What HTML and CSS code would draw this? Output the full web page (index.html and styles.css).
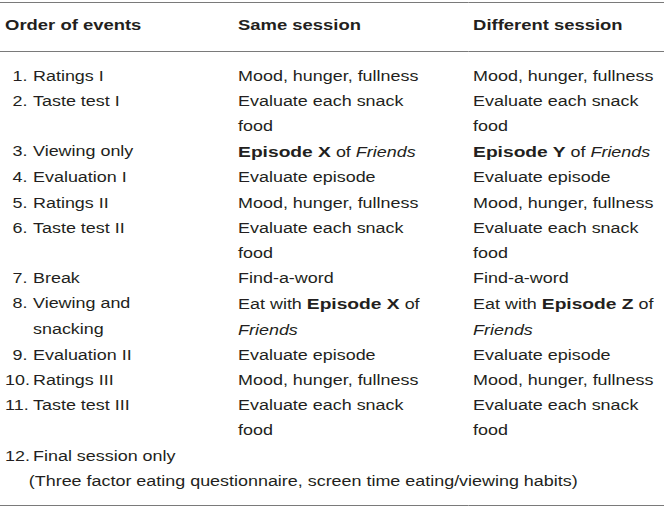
FILE: index.html
```html
<!DOCTYPE html>
<html lang="en">
<head>
  <meta charset="UTF-8">
  <title>Order of events</title>
  <link rel="stylesheet" href="styles.css">
</head>
<body>

<table class="events">
  <colgroup>
    <col class="c-order">
    <col class="c-same">
    <col class="c-diff">
  </colgroup>
  <thead>
    <tr>
      <th>Order of events</th>
      <th>Same session</th>
      <th>Different session</th>
    </tr>
  </thead>
  <tbody>
    <tr class="first">
      <td><div class="step"><span class="num">1.</span><span>Ratings I</span></div></td>
      <td>Mood, hunger, fullness</td>
      <td>Mood, hunger, fullness</td>
    </tr>
    <tr>
      <td><div class="step"><span class="num">2.</span><span>Taste test I</span></div></td>
      <td>Evaluate each snack<br>food</td>
      <td>Evaluate each snack<br>food</td>
    </tr>
    <tr>
      <td><div class="step"><span class="num">3.</span><span>Viewing only</span></div></td>
      <td><b>Episode X</b> of <i>Friends</i></td>
      <td><b>Episode Y</b> of <i>Friends</i></td>
    </tr>
    <tr>
      <td><div class="step"><span class="num">4.</span><span>Evaluation I</span></div></td>
      <td>Evaluate episode</td>
      <td>Evaluate episode</td>
    </tr>
    <tr>
      <td><div class="step"><span class="num">5.</span><span>Ratings II</span></div></td>
      <td>Mood, hunger, fullness</td>
      <td>Mood, hunger, fullness</td>
    </tr>
    <tr>
      <td><div class="step"><span class="num">6.</span><span>Taste test II</span></div></td>
      <td>Evaluate each snack<br>food</td>
      <td>Evaluate each snack<br>food</td>
    </tr>
    <tr>
      <td><div class="step"><span class="num">7.</span><span>Break</span></div></td>
      <td>Find-a-word</td>
      <td>Find-a-word</td>
    </tr>
    <tr>
      <td><div class="step"><span class="num">8.</span><span>Viewing and<br>snacking</span></div></td>
      <td>Eat with <b>Episode X</b> of<br><i>Friends</i></td>
      <td>Eat with <b>Episode Z</b> of<br><i>Friends</i></td>
    </tr>
    <tr>
      <td><div class="step"><span class="num">9.</span><span>Evaluation II</span></div></td>
      <td>Evaluate episode</td>
      <td>Evaluate episode</td>
    </tr>
    <tr>
      <td><div class="step"><span class="num">10.</span><span>Ratings III</span></div></td>
      <td>Mood, hunger, fullness</td>
      <td>Mood, hunger, fullness</td>
    </tr>
    <tr>
      <td><div class="step"><span class="num">11.</span><span>Taste test III</span></div></td>
      <td>Evaluate each snack<br>food</td>
      <td>Evaluate each snack<br>food</td>
    </tr>
    <tr class="last">
      <td colspan="3">
        <div class="step"><span class="num">12.</span><span>Final session only</span></div>
        <div class="note">(Three factor eating questionnaire, screen time eating/viewing habits)</div>
      </td>
    </tr>
  </tbody>
</table>

</body>
</html>
```

FILE: styles.css
```css
body {
  margin: 0;
  padding-top: 2px;
  background: #ffffff;
  color: #231f20;
  font-family: "Liberation Sans", Arial, sans-serif;
  font-size: 14px;
}
/* the source table is set wide: type is stretched sideways */
.events {
  width: 518.75px;
  border-collapse: collapse;
  table-layout: fixed;
  transform: scaleX(1.28);
  transform-origin: 0 0;
}
.c-order { width: 182px; }
.c-same { width: 183.6px; }
.c-diff { width: 153.15px; }
.events th {
  text-align: left;
  font-size: 14.4px;
  font-weight: bold;
  line-height: 25px;
  padding: 10px 4px 13px 4px;
  border-top: 1px solid #7a7a7a;
  border-bottom: 1px solid #7a7a7a;
}
.events td {
  vertical-align: top;
  line-height: 25.2px;
  padding: 0 4px;
  white-space: nowrap;
}
.events tr.first td { padding-top: 11.5px; }
.events tr.last td {
  padding-bottom: 11.5px;
  border-bottom: 1px solid #7a7a7a;
}
.step {
  display: flex;
}
.num {
  flex: none;
  width: 17.5px;
  margin-right: 4.3px;
  text-align: right;
}
.note {
  padding-left: 18.5px;
}
.events b {
  font-size: 15px;
  font-weight: bold;
}
```
